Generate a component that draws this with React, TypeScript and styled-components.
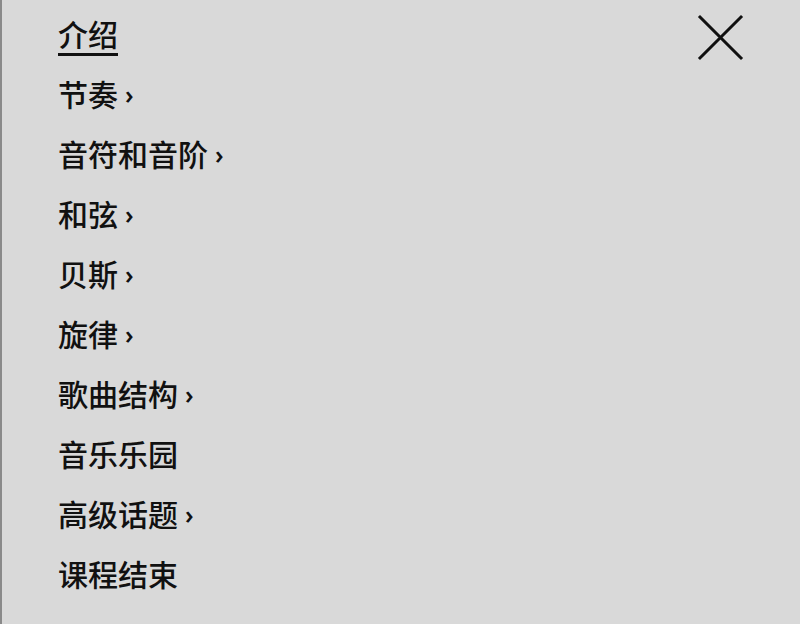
import React from "react";
import styled, { createGlobalStyle } from "styled-components";

const Global = createGlobalStyle`
  html, body { margin: 0; padding: 0; background: #d9d9d9; }
  body { font-family: "Noto Sans CJK SC", "Noto Sans", sans-serif; color: #111; }
`;

const Panel = styled.div`
  box-sizing: border-box;
  width: 800px;
  height: 624px;
  background: #d9d9d9;
  border-left: 2px solid #8a8a8a;
  display: flex;
  justify-content: space-between;
  align-items: flex-start;
  padding: 3px 56px 0 56px;
`;

const Menu = styled.ul`
  list-style: none;
  margin: 0;
  padding: 0;
  display: flex;
  flex-direction: column;
`;

const Item = styled.li`
  height: 60px;
  display: flex;
  align-items: center;
  font-size: 30px;
  font-weight: 500;
  line-height: 1;
  color: #111;
`;

const Label = styled.span<{ $active?: boolean }>`
  display: inline-block;
  position: relative;
  ${(p) =>
    p.$active &&
    `
    &::after {
      content: "";
      position: absolute;
      left: 0;
      right: 0;
      bottom: -8px;
      height: 3px;
      background: #111;
    }
  `}
`;

const Chevron = styled.span`
  font-family: "Noto Sans", sans-serif;
  font-size: 25px;
  font-weight: 600;
  margin-left: 7px;
  position: relative;
  top: 1px;
`;

const Close = styled.button`
  margin-top: 11px;
  width: 48px;
  height: 48px;
  padding: 0;
  border: none;
  background: transparent;
  display: flex;
  align-items: center;
  justify-content: center;
  cursor: pointer;
`;

const items: { label: string; more: boolean; active?: boolean }[] = [
  { label: "介绍", more: false, active: true },
  { label: "节奏", more: true },
  { label: "音符和音阶", more: true },
  { label: "和弦", more: true },
  { label: "贝斯", more: true },
  { label: "旋律", more: true },
  { label: "歌曲结构", more: true },
  { label: "音乐乐园", more: false },
  { label: "高级话题", more: true },
  { label: "课程结束", more: false },
];

export default function App() {
  return (
    <>
      <Global />
      <Panel>
        <Menu>
          {items.map((it) => (
            <Item key={it.label}>
              <Label $active={it.active}>{it.label}</Label>
              {it.more && <Chevron>›</Chevron>}
            </Item>
          ))}
        </Menu>
        <Close aria-label="关闭">
          <svg width="48" height="48" viewBox="0 0 48 48">
            <path d="M4 3 L45 44 M45 3 L4 44" stroke="#111" strokeWidth="3" strokeLinecap="square" fill="none" />
          </svg>
        </Close>
      </Panel>
    </>
  );
}
